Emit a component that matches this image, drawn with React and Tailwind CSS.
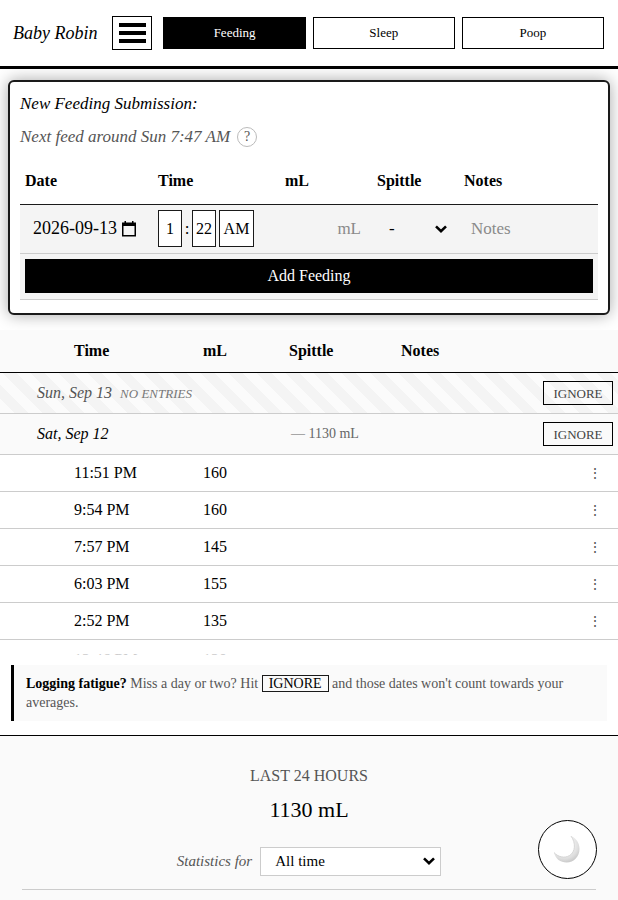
import React, { useState } from 'react'

const TABS = ['Feeding', 'Sleep', 'Poop']

const FEEDINGS = [
  { time: '11:51 PM', ml: 160 },
  { time: '9:54 PM', ml: 160 },
  { time: '7:57 PM', ml: 145 },
  { time: '6:03 PM', ml: 155 },
  { time: '2:52 PM', ml: 135 },
]

function Chevron({ className }) {
  return (
    <svg
      className={`pointer-events-none absolute top-1/2 h-2 w-3 -translate-y-1/2 ${className}`}
      viewBox="0 0 12 8"
      fill="none"
      stroke="black"
      strokeWidth="2.6"
      aria-hidden="true"
    >
      <path d="M1 1.4 6 6.2 11 1.4" />
    </svg>
  )
}

function Header({ tab, setTab }) {
  return (
    <header className="flex items-center border-b-3 border-black bg-white pt-4 pr-[14px] pb-4 pl-[13px]">
      <h1 className="text-lg leading-6 italic whitespace-nowrap">Baby Robin</h1>
      <button
        aria-label="Menu"
        className="ml-[15px] flex h-[34px] w-10 shrink-0 flex-col items-center justify-center gap-1 border border-black bg-white"
      >
        <span className="h-1 w-[27px] bg-black" />
        <span className="h-1 w-[27px] bg-black" />
        <span className="h-1 w-[27px] bg-black" />
      </button>
      <nav className="ml-[11px] grid flex-1 grid-cols-3 gap-[7px]">
        {TABS.map((name) => (
          <button
            key={name}
            onClick={() => setTab(name)}
            className={`h-8 border border-black text-[13px] ${
              tab === name ? 'bg-black text-white' : 'bg-white text-black'
            }`}
          >
            {name}
          </button>
        ))}
      </nav>
    </header>
  )
}

function FeedingForm() {
  const [spittle, setSpittle] = useState('-')

  return (
    <form
      className="mx-2 mt-[11px] rounded-md border-2 border-[#1a1a1a] bg-white px-[10px] pt-3 pb-[13px] shadow-[0_0_16px_rgba(0,0,0,0.35)]"
      onSubmit={(e) => e.preventDefault()}
    >
      <h2 className="text-[17px] leading-5 italic">New Feeding Submission:</h2>
      <div className="mt-[13px] flex items-center gap-[7px]">
        <p className="text-[17px] leading-5 text-[#555] italic">Next feed around Sun 7:47 AM</p>
        <button
          type="button"
          aria-label="How is this estimated?"
          className="h-5 w-5 rounded-full border border-[#bbb] text-sm leading-4 text-[#555]"
        >
          ?
        </button>
      </div>

      <table className="mt-[11px] w-full table-fixed border-collapse text-left">
        <thead>
          <tr className="h-[46px] border-b border-[#1a1a1a] text-base">
            <th className="w-[133px] px-[5px]">Date</th>
            <th className="w-[127px] px-[5px]">Time</th>
            <th className="w-[92px] px-[5px]">mL</th>
            <th className="w-[87px] px-[5px]">Spittle</th>
            <th className="px-[5px]">Notes</th>
          </tr>
        </thead>
        <tbody className="bg-[#f4f4f4] text-[17px]">
          <tr className="h-[49px] border-b border-[#ccc]">
            <td className="pl-[13px]">
              <div className="flex items-center">
                <input
                  aria-label="Date"
                  defaultValue="2026-09-13"
                  className="h-9 w-[88px] bg-transparent text-lg"
                />
                <button type="button" aria-label="Pick a date">
                  <svg className="h-4 w-4" viewBox="0 0 16 16" aria-hidden="true">
                    <path
                      d="M3.5 0H5v1.6h6V0h1.5v1.6H15V15.5H1V1.6h2.5zM2.5 5v9h11V5z"
                      fillRule="evenodd"
                    />
                  </svg>
                </button>
              </div>
            </td>
            <td className="pl-[5px]">
              <div className="flex items-center">
                <input
                  aria-label="Hour"
                  defaultValue="1"
                  className="h-[37px] w-6 border border-[#1a1a1a] bg-white text-center text-base"
                />
                <span className="w-[10px] text-center">:</span>
                <input
                  aria-label="Minute"
                  defaultValue="22"
                  className="h-[37px] w-6 border border-[#1a1a1a] bg-white text-center text-base"
                />
                <button
                  type="button"
                  className="ml-[3px] h-[37px] w-[35px] border border-[#1a1a1a] bg-white text-base"
                >
                  AM
                </button>
              </div>
            </td>
            <td className="pr-[11px]">
              <input
                aria-label="mL"
                placeholder="mL"
                className="h-9 w-full bg-transparent text-right placeholder:text-[#8a8a8a]"
              />
            </td>
            <td>
              <div className="relative">
                <select
                  aria-label="Spittle"
                  value={spittle}
                  onChange={(e) => setSpittle(e.target.value)}
                  className="h-9 w-full appearance-none bg-transparent pl-[17px]"
                >
                  <option>-</option>
                  <option>S</option>
                  <option>M</option>
                  <option>L</option>
                </select>
                <Chevron className="right-3" />
              </div>
            </td>
            <td className="pl-3">
              <input
                aria-label="Notes"
                placeholder="Notes"
                className="h-9 w-full bg-transparent placeholder:text-[#8a8a8a]"
              />
            </td>
          </tr>
          <tr className="h-[46px] border-b border-[#ccc]">
            <td colSpan={5} className="px-[5px]">
              <button className="block h-[34px] w-full bg-black text-base text-white">
                Add Feeding
              </button>
            </td>
          </tr>
        </tbody>
      </table>
    </form>
  )
}

function IgnoreButton() {
  return (
    <button className="h-6 w-[70px] border border-black text-[13px] text-[#444]">IGNORE</button>
  )
}

function History() {
  return (
    <section className="mt-[15px] h-[325px] overflow-hidden">
      <table className="w-full table-fixed border-collapse text-left">
        <thead>
          <tr className="h-[43px] border-b border-black bg-[#fafafa] text-base">
            <th className="w-[195px] pl-[74px]">Time</th>
            <th className="w-[86px] pl-2">mL</th>
            <th className="w-[112px] pl-2">Spittle</th>
            <th className="pl-2">Notes</th>
            <th className="w-20" aria-label="Actions" />
          </tr>
        </thead>
        <tbody>
          <tr className="h-[41px] border-b border-[#ccc] bg-[repeating-linear-gradient(45deg,#fbfbfb_0_10px,#f4f4f4_10px_20px)]">
            <td colSpan={4} className="pl-[37px] text-base text-[#555] italic">
              Sun, Sep 13
              <span className="ml-2 text-[13px] text-[#777]">NO ENTRIES</span>
            </td>
            <td className="pr-[5px] text-right">
              <IgnoreButton />
            </td>
          </tr>
          <tr className="h-[41px] border-b border-[#ccc] bg-[#fafafa]">
            <td colSpan={2} className="pl-[37px] text-base italic">Sat, Sep 12</td>
            <td colSpan={2} className="pl-[10px] text-sm text-[#666]">— 1130 mL</td>
            <td className="pr-[5px] text-right">
              <IgnoreButton />
            </td>
          </tr>
          {FEEDINGS.map(({ time, ml }) => (
            <tr key={time} className="h-[37px] border-b border-[#ccc] text-base">
              <td className="pl-[74px]">{time}</td>
              <td className="pl-2">{ml}</td>
              <td />
              <td />
              <td className="pr-4 text-right">
                <button aria-label={`Options for ${time}`} className="text-sm text-[#555]">⋮</button>
              </td>
            </tr>
          ))}
          <tr className="h-[41px] text-base text-[#ccc]">
            <td className="pl-[74px]">12:46 PM</td>
            <td className="pl-2">120</td>
            <td colSpan={3} />
          </tr>
        </tbody>
      </table>
    </section>
  )
}

function Stats() {
  return (
    <section className="flex-1 border-t border-black bg-[#fafafa] px-[22px] pt-[30px] text-center">
      <h3 className="text-base leading-5 text-[#555]">LAST 24 HOURS</h3>
      <p className="mt-2 text-[22px] leading-8">1130 mL</p>
      <div className="mt-[21px] flex items-center justify-center gap-2 border-b border-[#ccc] pb-[13px]">
        <label htmlFor="range" className="text-[15px] text-[#555] italic">Statistics for</label>
        <div className="relative">
          <select
            id="range"
            className="h-[29px] w-[181px] appearance-none border border-[#ccc] bg-white pl-[14px] text-[15px]"
          >
            <option>All time</option>
            <option>Last 7 days</option>
            <option>Last 30 days</option>
          </select>
          <Chevron className="right-[6px]" />
        </div>
      </div>
    </section>
  )
}

function ThemeToggle() {
  return (
    <button
      aria-label="Dark mode"
      className="fixed right-[21px] bottom-[21px] flex h-[59px] w-[59px] items-center justify-center rounded-full border border-black bg-white"
    >
      <svg className="h-7 w-7" viewBox="0 0 28 28" aria-hidden="true">
        <defs>
          <radialGradient id="moon" cx="0.4" cy="0.3" r="0.75">
            <stop offset="0.4" stopColor="#f2f2f2" />
            <stop offset="0.75" stopColor="#dedede" />
            <stop offset="1" stopColor="#c4c4c4" />
          </radialGradient>
        </defs>
        <path
          d="M17 0C22.500 2.500 25.500 7 25.500 13 25.500 20.500 20 26.500 12.500 26.500 6.500 26.500 1.500 23 0 16.500 4 21 10.500 22.500 15.500 19.500 21.500 16 22 7 17 0Z"
          fill="url(#moon)"
        />
        <path
          d="M0 16.500C4 21 10.500 22.500 15.500 19.500 21.500 16 22 7 17 0"
          fill="none"
          stroke="#cfcfcf"
          strokeWidth="0.8"
        />
      </svg>
    </button>
  )
}

export default function App() {
  const [tab, setTab] = useState('Feeding')

  return (
    <div className="flex min-h-screen flex-col bg-white font-['Liberation_Serif',serif] text-black">
      <Header tab={tab} setTab={setTab} />
      <FeedingForm />
      <History />
      <aside className="mx-[11px] mt-[10px] mb-[14px] border-l-3 border-black bg-[#fafafa] px-3 pt-[9px] pb-[9px] text-sm leading-[19px] text-[#555]">
        <strong className="text-black">Logging fatigue?</strong> Miss a day or two? Hit{' '}
        <span className="border border-[#1a1a1a] px-[6px] text-black">IGNORE</span> and those
        dates won't count towards your averages.
      </aside>
      <Stats />
      <ThemeToggle />
    </div>
  )
}
